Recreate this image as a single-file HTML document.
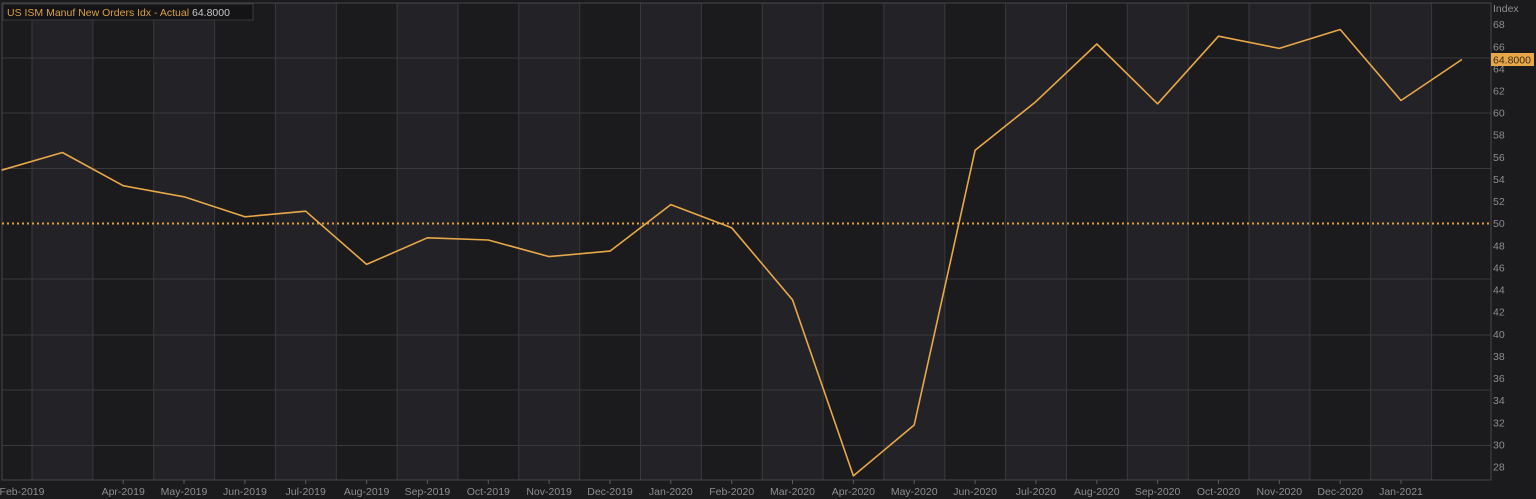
<!DOCTYPE html>
<html><head><style>
html,body{margin:0;padding:0;background:#1b1a1d;width:1536px;height:499px;overflow:hidden}
svg{display:block}
text{font-family:"Liberation Sans",sans-serif}
</style></head><body>
<svg width="1536" height="499" viewBox="0 0 1536 499">
<rect width="1536" height="499" fill="#1b1a1d"/>
<g fill="#232226">
<rect x="32" y="3" width="61" height="477"/>
<rect x="153.7" y="3" width="61" height="477"/>
<rect x="275.4" y="3" width="61" height="477"/>
<rect x="397.1" y="3" width="61" height="477"/>
<rect x="518.8" y="3" width="61" height="477"/>
<rect x="640.5" y="3" width="61" height="477"/>
<rect x="762.2" y="3" width="61" height="477"/>
<rect x="883.9" y="3" width="61" height="477"/>
<rect x="1005.6" y="3" width="61" height="477"/>
<rect x="1127.3" y="3" width="61" height="477"/>
<rect x="1249" y="3" width="61" height="477"/>
<rect x="1370.7" y="3" width="61" height="477"/>
</g>
<g stroke="#3a393d" stroke-width="1">
<line x1="32" y1="3" x2="32" y2="480"/><line x1="92.9" y1="3" x2="92.9" y2="480"/><line x1="153.7" y1="3" x2="153.7" y2="480"/><line x1="214.6" y1="3" x2="214.6" y2="480"/><line x1="275.4" y1="3" x2="275.4" y2="480"/><line x1="336.3" y1="3" x2="336.3" y2="480"/><line x1="397.1" y1="3" x2="397.1" y2="480"/><line x1="458" y1="3" x2="458" y2="480"/><line x1="518.8" y1="3" x2="518.8" y2="480"/><line x1="579.7" y1="3" x2="579.7" y2="480"/><line x1="640.5" y1="3" x2="640.5" y2="480"/><line x1="701.4" y1="3" x2="701.4" y2="480"/><line x1="762.2" y1="3" x2="762.2" y2="480"/><line x1="823.1" y1="3" x2="823.1" y2="480"/><line x1="883.9" y1="3" x2="883.9" y2="480"/><line x1="944.8" y1="3" x2="944.8" y2="480"/><line x1="1005.6" y1="3" x2="1005.6" y2="480"/><line x1="1066.5" y1="3" x2="1066.5" y2="480"/><line x1="1127.3" y1="3" x2="1127.3" y2="480"/><line x1="1188.2" y1="3" x2="1188.2" y2="480"/><line x1="1249" y1="3" x2="1249" y2="480"/><line x1="1309.9" y1="3" x2="1309.9" y2="480"/><line x1="1370.7" y1="3" x2="1370.7" y2="480"/><line x1="1431.6" y1="3" x2="1431.6" y2="480"/>
<line x1="2" y1="58" x2="1491" y2="58"/><line x1="2" y1="113" x2="1491" y2="113"/><line x1="2" y1="168.5" x2="1491" y2="168.5"/><line x1="2" y1="279" x2="1491" y2="279"/><line x1="2" y1="335" x2="1491" y2="335"/><line x1="2" y1="390" x2="1491" y2="390"/><line x1="2" y1="445.5" x2="1491" y2="445.5"/>
</g>
<rect x="2" y="3" width="1489" height="477" fill="none" stroke="#48474b"/>
<line x1="2" y1="223.5" x2="1491" y2="223.5" stroke="#e0a040" stroke-width="2" stroke-dasharray="2,3"/>
<g stroke="#5a595d">
<line x1="123.2" y1="480" x2="123.2" y2="484"/><line x1="184" y1="480" x2="184" y2="484"/><line x1="244.9" y1="480" x2="244.9" y2="484"/><line x1="305.7" y1="480" x2="305.7" y2="484"/><line x1="366.6" y1="480" x2="366.6" y2="484"/><line x1="427.4" y1="480" x2="427.4" y2="484"/><line x1="488.3" y1="480" x2="488.3" y2="484"/><line x1="549.1" y1="480" x2="549.1" y2="484"/><line x1="610" y1="480" x2="610" y2="484"/><line x1="670.8" y1="480" x2="670.8" y2="484"/><line x1="731.7" y1="480" x2="731.7" y2="484"/><line x1="792.5" y1="480" x2="792.5" y2="484"/><line x1="853.4" y1="480" x2="853.4" y2="484"/><line x1="914.2" y1="480" x2="914.2" y2="484"/><line x1="975.1" y1="480" x2="975.1" y2="484"/><line x1="1035.9" y1="480" x2="1035.9" y2="484"/><line x1="1096.8" y1="480" x2="1096.8" y2="484"/><line x1="1157.6" y1="480" x2="1157.6" y2="484"/><line x1="1218.5" y1="480" x2="1218.5" y2="484"/><line x1="1279.3" y1="480" x2="1279.3" y2="484"/><line x1="1340.2" y1="480" x2="1340.2" y2="484"/><line x1="1401" y1="480" x2="1401" y2="484"/>
</g>
<polyline fill="none" stroke="#e8a849" stroke-width="1.6" stroke-linejoin="round" points="1.5,170.2 62.4,152.5 123.2,185.7 184,196.8 244.9,216.8 305.7,211.2 366.6,264.4 427.4,237.8 488.3,240 549.1,256.6 610,251.1 670.8,204.6 731.7,227.8 792.5,299.8 853.4,475.9 914.2,425 975.1,150.3 1035.9,101.6 1096.8,44 1157.6,103.8 1218.5,36.2 1279.3,48.4 1340.2,29.5 1401,100.5 1461.9,59.5"/>
<g fill="#8e8d91" font-size="10.5">
<text x="1493" y="12">Index</text>
<text x="1493" y="28">68</text><text x="1493" y="50.5">66</text><text x="1493" y="72.5">64</text><text x="1493" y="94.5">62</text><text x="1493" y="116.5">60</text><text x="1493" y="138.5">58</text><text x="1493" y="161">56</text><text x="1493" y="183">54</text><text x="1493" y="205">52</text><text x="1493" y="227">50</text><text x="1493" y="249.5">48</text><text x="1493" y="271.5">46</text><text x="1493" y="293.5">44</text><text x="1493" y="315.5">42</text><text x="1493" y="338">40</text><text x="1493" y="360">38</text><text x="1493" y="382">36</text><text x="1493" y="404">34</text><text x="1493" y="426.5">32</text><text x="1493" y="448.5">30</text><text x="1493" y="470.5">28</text>
</g>
<rect x="1491" y="53" width="43" height="13" fill="#e8a849"/>
<text x="1493" y="63.5" font-size="10.5" fill="#3a2a10">64.8000</text>
<g fill="#8e8d91" font-size="10.5" text-anchor="middle">
<text x="22" y="495">Feb-2019</text><text x="123.2" y="495">Apr-2019</text><text x="184" y="495">May-2019</text><text x="244.9" y="495">Jun-2019</text><text x="305.7" y="495">Jul-2019</text><text x="366.6" y="495">Aug-2019</text><text x="427.4" y="495">Sep-2019</text><text x="488.3" y="495">Oct-2019</text><text x="549.1" y="495">Nov-2019</text><text x="610" y="495">Dec-2019</text><text x="670.8" y="495">Jan-2020</text><text x="731.7" y="495">Feb-2020</text><text x="792.5" y="495">Mar-2020</text><text x="853.4" y="495">Apr-2020</text><text x="914.2" y="495">May-2020</text><text x="975.1" y="495">Jun-2020</text><text x="1035.9" y="495">Jul-2020</text><text x="1096.8" y="495">Aug-2020</text><text x="1157.6" y="495">Sep-2020</text><text x="1218.5" y="495">Oct-2020</text><text x="1279.3" y="495">Nov-2020</text><text x="1340.2" y="495">Dec-2020</text><text x="1401" y="495">Jan-2021</text>
</g>
<rect x="3" y="4" width="250" height="16" fill="#141316" stroke="#3a393d"/>
<text x="7" y="16" font-size="10.5" fill="#d9a044">US ISM Manuf New Orders Idx - Actual</text>
<text x="192" y="16" font-size="10.5" fill="#c8c7cb">64.8000</text>
</svg>
</body></html>
